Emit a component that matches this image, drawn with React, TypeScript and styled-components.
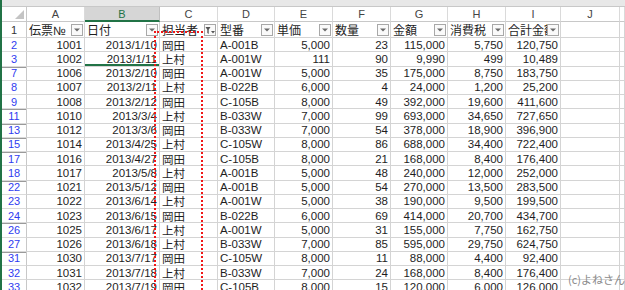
import React from "react";
import styled, { createGlobalStyle } from "styled-components";

const COLS = "25px 58px 75px 58px 57px 58px 58px 57px 58px 55px 59px 1fr";
const GRID = "#d4d4d4";
const GREEN = "#217346";

const GlobalStyle = createGlobalStyle`
  html, body {
    margin: 0;
    padding: 0;
    background: #fff;
    overflow: hidden;
  }
  body {
    font-family: "Liberation Sans", "Noto Sans CJK JP", sans-serif;
  }
`;

const Window = styled.div`
  display: flex;
  width: 625px;
  height: 290px;
  overflow: hidden;
`;

const GreenEdge = styled.div`
  width: 2px;
  flex: none;
  background: ${GREEN};
`;

const Sheet = styled.div`
  position: relative;
  flex: 1;
  display: flex;
  flex-direction: column;
  overflow: hidden;
`;

const TopStrip = styled.div`
  height: 6px;
  flex: none;
  background: #e8e8e8;
  border-bottom: 1px solid #c8c8c8;
`;

const Row = styled.div<{ $h: number }>`
  display: grid;
  grid-template-columns: ${COLS};
  height: ${(p) => p.$h}px;
  flex: none;
`;

const Corner = styled.div`
  position: relative;
  background: #fff;
  border-right: 1px solid #c8c8c8;
  border-bottom: 1px solid #c8c8c8;
  &::after {
    content: "";
    position: absolute;
    right: 2px;
    bottom: 2px;
    border-style: solid;
    border-width: 0 0 9px 9px;
    border-color: transparent transparent #c4c4c4 transparent;
  }
`;

const ColLetter = styled.div<{ $active?: boolean }>`
  display: flex;
  align-items: center;
  justify-content: center;
  font-size: 11px;
  color: ${(p) => (p.$active ? GREEN : "#444")};
  background: ${(p) => (p.$active ? "#d6d6d6" : "#fff")};
  border-right: 1px solid ${(p) => (p.$active ? "#c0c0c0" : "#dadada")};
  border-bottom: ${(p) => (p.$active ? `2px solid ${GREEN}` : "1px solid #c8c8c8")};
  box-sizing: border-box;
`;

const RowNum = styled.div<{ $blue?: boolean; $gap?: boolean }>`
  display: flex;
  align-items: center;
  justify-content: center;
  font-size: 11px;
  color: ${(p) => (p.$blue ? "#2f3cf0" : "#333")};
  background: #fff;
  border-right: 1px solid #c8c8c8;
  border-bottom: 1px solid #dadada;
  box-shadow: ${(p) => (p.$gap ? "inset 0 1px 0 #9a9a9a" : "none")};
  box-sizing: border-box;
`;

const Cell = styled.div<{ $right?: boolean; $selected?: boolean }>`
  position: relative;
  display: flex;
  align-items: center;
  justify-content: ${(p) => (p.$right ? "flex-end" : "flex-start")};
  padding: 0 2px;
  font-size: 11.5px;
  color: #1e1e1e;
  white-space: nowrap;
  overflow: ${(p) => (p.$right ? "visible" : "hidden")};
  border-right: 1px solid ${GRID};
  border-bottom: 1px solid ${GRID};
  box-sizing: border-box;
  box-shadow: ${(p) => (p.$selected ? `inset 0 -2px 0 ${GREEN}` : "none")};
`;

const FieldCell = styled.div`
  position: relative;
  display: flex;
  align-items: center;
  padding: 0 2px;
  font-size: 12px;
  color: #1e1e1e;
  white-space: nowrap;
  overflow: hidden;
  border-right: 1px solid ${GRID};
  border-bottom: 1px solid ${GRID};
  box-sizing: border-box;
`;

const FilterButton = styled.div`
  position: absolute;
  right: 1px;
  top: 2px;
  width: 12px;
  height: 12px;
  display: flex;
  align-items: center;
  justify-content: center;
  background: #fafafa;
  border: 1px solid #a8a8a8;
  box-sizing: border-box;
`;

const Marquee = styled.div`
  position: absolute;
  left: 152px;
  top: 31px;
  width: 49px;
  bottom: -4px;
  border: 2px dotted #f01818;
  border-bottom: none;
  box-sizing: border-box;
  pointer-events: none;
`;

const Credit = styled.div`
  position: absolute;
  right: 0;
  top: 271px;
  font-size: 11px;
  color: #8a8a8a;
  font-family: "Noto Sans CJK JP", sans-serif;
`;

const Arrow = () => (
  <svg width="6" height="4" viewBox="0 0 6 4">
    <path d="M0 0.5 L6 0.5 L3 3.5 Z" fill="#6a6a6a" />
  </svg>
);

const FunnelArrow = () => (
  <svg width="10" height="9" viewBox="0 0 10 9">
    <path d="M0.5 1 L5.5 1 L3.7 3.8 L3.7 8 L2.3 7 L2.3 3.8 Z" fill="#555" />
    <path d="M6 5 L10 5 L8 7.5 Z" fill="#555" />
  </svg>
);

const letters = ["A", "B", "C", "D", "E", "F", "G", "H", "I", "J", ""];
const fields = ["伝票№", "日付", "担当者", "型番", "単価", "数量", "金額", "消費税", "合計金額"];

type Rec = [number, string, string, string, string, string, string, string, string];

const data: Rec[] = [
  [1001, "2013/1/10", "岡田", "A-001B", "5,000", "23", "115,000", "5,750", "120,750"],
  [1002, "2013/1/11", "上村", "A-001W", "111", "90", "9,990", "499", "10,489"],
  [1006, "2013/2/10", "岡田", "A-001W", "5,000", "35", "175,000", "8,750", "183,750"],
  [1007, "2013/2/11", "上村", "B-022B", "6,000", "4", "24,000", "1,200", "25,200"],
  [1008, "2013/2/12", "岡田", "C-105B", "8,000", "49", "392,000", "19,600", "411,600"],
  [1010, "2013/3/4", "上村", "B-033W", "7,000", "99", "693,000", "34,650", "727,650"],
  [1012, "2013/3/6", "岡田", "B-033W", "7,000", "54", "378,000", "18,900", "396,900"],
  [1014, "2013/4/25", "上村", "C-105W", "8,000", "86", "688,000", "34,400", "722,400"],
  [1016, "2013/4/27", "岡田", "C-105B", "8,000", "21", "168,000", "8,400", "176,400"],
  [1017, "2013/5/8", "上村", "A-001B", "5,000", "48", "240,000", "12,000", "252,000"],
  [1021, "2013/5/12", "岡田", "A-001B", "5,000", "54", "270,000", "13,500", "283,500"],
  [1022, "2013/6/14", "上村", "A-001W", "5,000", "38", "190,000", "9,500", "199,500"],
  [1023, "2013/6/15", "岡田", "B-022B", "6,000", "69", "414,000", "20,700", "434,700"],
  [1025, "2013/6/17", "上村", "A-001W", "5,000", "31", "155,000", "7,750", "162,750"],
  [1026, "2013/6/18", "上村", "B-033W", "7,000", "85", "595,000", "29,750", "624,750"],
  [1030, "2013/7/17", "岡田", "C-105W", "8,000", "11", "88,000", "4,400", "92,400"],
  [1031, "2013/7/18", "上村", "B-033W", "7,000", "24", "168,000", "8,400", "176,400"],
  [1032, "2013/7/19", "岡田", "C-105B", "8,000", "15", "120,000", "6,000", "126,000"],
];

export default function App() {
  return (
    <>
      <GlobalStyle />
      <Window>
        <GreenEdge />
        <Sheet>
          <TopStrip />
          <Row $h={15}>
            <Corner />
            {letters.map((l, i) => (
              <ColLetter key={i} $active={l === "B"}>
                {l}
              </ColLetter>
            ))}
          </Row>
          <Row $h={16}>
            <RowNum>1</RowNum>
            {fields.map((f, i) => (
              <FieldCell key={f}>
                {f}
                <FilterButton>{i === 2 ? <FunnelArrow /> : <Arrow />}</FilterButton>
              </FieldCell>
            ))}
            <FieldCell />
            <FieldCell />
          </Row>
          {data.map((r, idx) => {
            const rowNo = r[0] - 999;
            const prev = idx > 0 ? data[idx - 1][0] - 999 : 1;
            return (
              <Row $h={14.25} key={r[0]}>
                <RowNum $blue $gap={rowNo - prev > 1}>
                  {rowNo}
                </RowNum>
                <Cell $right>{r[0]}</Cell>
                <Cell $right $selected={rowNo === 3}>
                  {r[1]}
                </Cell>
                <Cell>{r[2]}</Cell>
                <Cell>{r[3]}</Cell>
                <Cell $right>{r[4]}</Cell>
                <Cell $right>{r[5]}</Cell>
                <Cell $right>{r[6]}</Cell>
                <Cell $right>{r[7]}</Cell>
                <Cell $right>{r[8]}</Cell>
                <Cell />
                <Cell />
              </Row>
            );
          })}
          <Marquee />
          <Credit>(c)よねさん</Credit>
        </Sheet>
      </Window>
    </>
  );
}
